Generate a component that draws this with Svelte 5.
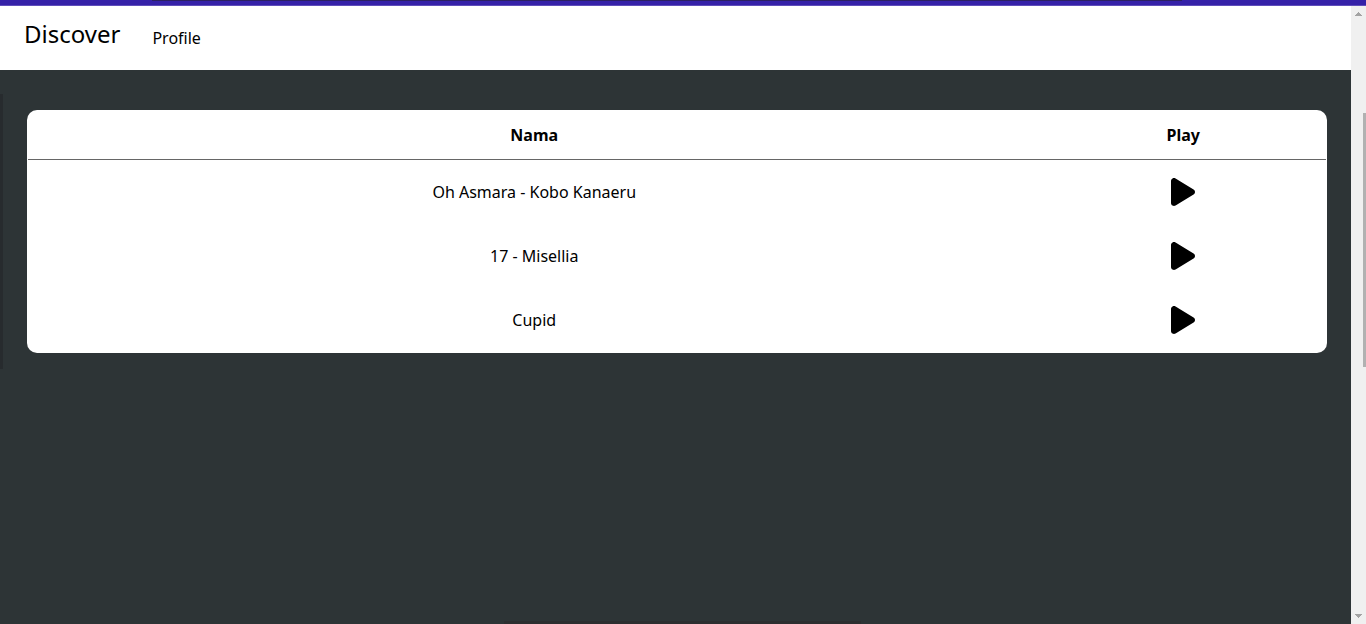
<script>
  const songs = ['Oh Asmara - Kobo Kanaeru', '17 - Misellia', 'Cupid'];
</script>

<div class="window">
  <div class="frame"><span class="tabline"></span></div>
  <div class="view">
    <div class="page">
      <nav>
        <a class="brand" href="#discover">Discover</a>
        <a class="link" href="#profile">Profile</a>
      </nav>
      <main>
        <div class="card">
          <table>
            <thead>
              <tr><th scope="col" class="name">Nama</th><th scope="col">Play</th></tr>
            </thead>
            <tbody>
              {#each songs as song}
                <tr>
                  <td>{song}</td>
                  <td>
                    <button type="button" aria-label="Play {song}">
                      <svg viewBox="0 0 384 512" width="24" height="32" aria-hidden="true">
                        <path d="M73 39c-14.800-9.100-33.400-9.400-48.500-.9S0 62.600 0 80V432c0 17.400 9.400 33.400 24.500 41.900s33.700 8.100 48.500-.9L361 297c14.300-8.700 23-24.200 23-41s-8.700-32.200-23-41L73 39z" />
                      </svg>
                    </button>
                  </td>
                </tr>
              {/each}
            </tbody>
          </table>
        </div>
      </main>
    </div>
    <div class="scrollbar" aria-hidden="true">
      <svg viewBox="0 0 7 4" width="7" height="4" shape-rendering="crispEdges"><path d="M3 0h1v1h1v1h1v1h1v1H0V3h1V2h1V1h1z" /></svg>
      <span class="thumb"></span>
      <svg viewBox="0 0 7 4" width="7" height="4" shape-rendering="crispEdges"><path d="M0 0h7v1H6v1H5v1H4v1H3V3H2V2H1V1H0z" /></svg>
    </div>
  </div>
  <span class="edge left"></span>
  <span class="edge bottom"></span>
</div>

<style>
  :global(body) {
    margin: 0;
    background: #2d3436;
  }
  .window {
    position: relative;
    display: flex;
    flex-direction: column;
    min-height: 100vh;
    color: #000;
    background: #2d3436;
    font: 16px/24px "Noto Sans", sans-serif;
  }
  .frame {
    box-sizing: border-box;
    height: 6px;
    background: #3521a8;
    border-bottom: 1px solid #5f4dba;
  }
  .tabline {
    display: block;
    width: 75.4%;
    height: 1px;
    margin-left: 11.1%;
    background: #2b2063;
  }
  .view {
    flex: 1;
    display: flex;
  }
  .page {
    flex: 1;
    min-width: 0;
  }
  nav {
    display: flex;
    align-items: center;
    gap: 32px;
    box-sizing: border-box;
    height: 64px;
    padding: 0 24px;
    background: #fff;
  }
  nav a {
    color: inherit;
    text-decoration: none;
  }
  .brand {
    padding-bottom: 8px;
    font-size: 24px;
    line-height: 32px;
  }
  main {
    padding: 40px 24px 40px 27px;
  }
  .card {
    overflow: hidden;
    padding: 0 1px 1px;
    border-radius: 10px;
    background: #fff;
  }
  table {
    width: 100%;
    table-layout: fixed;
    border-collapse: separate;
    border-spacing: 0;
    text-align: center;
  }
  th {
    box-sizing: border-box;
    height: 50px;
    padding: 0;
    border-bottom: 1px solid #666;
    font-weight: 700;
  }
  .name {
    width: 78%;
  }
  td {
    height: 64px;
    padding: 0;
  }
  button {
    display: block;
    margin: 0 auto;
    padding: 0;
    border: 0;
    background: none;
    cursor: pointer;
  }
  button svg {
    display: block;
  }
  .scrollbar {
    position: relative;
    display: flex;
    flex-direction: column;
    align-items: center;
    justify-content: space-between;
    box-sizing: border-box;
    width: 15px;
    padding: 6px 0;
    background: #f0f0f0;
  }
  .scrollbar svg {
    fill: #a3a3a3;
  }
  .thumb {
    position: absolute;
    top: 107px;
    right: 0;
    width: 3px;
    height: 254px;
    background: #b1b1b1;
  }
  .edge {
    position: absolute;
    background: #272b2e;
  }
  .left {
    top: 94px;
    left: 0;
    width: 3px;
    height: 275px;
  }
  .bottom {
    bottom: 0;
    left: 504px;
    width: 357px;
    height: 3px;
    background: #2c2e30;
  }
</style>
